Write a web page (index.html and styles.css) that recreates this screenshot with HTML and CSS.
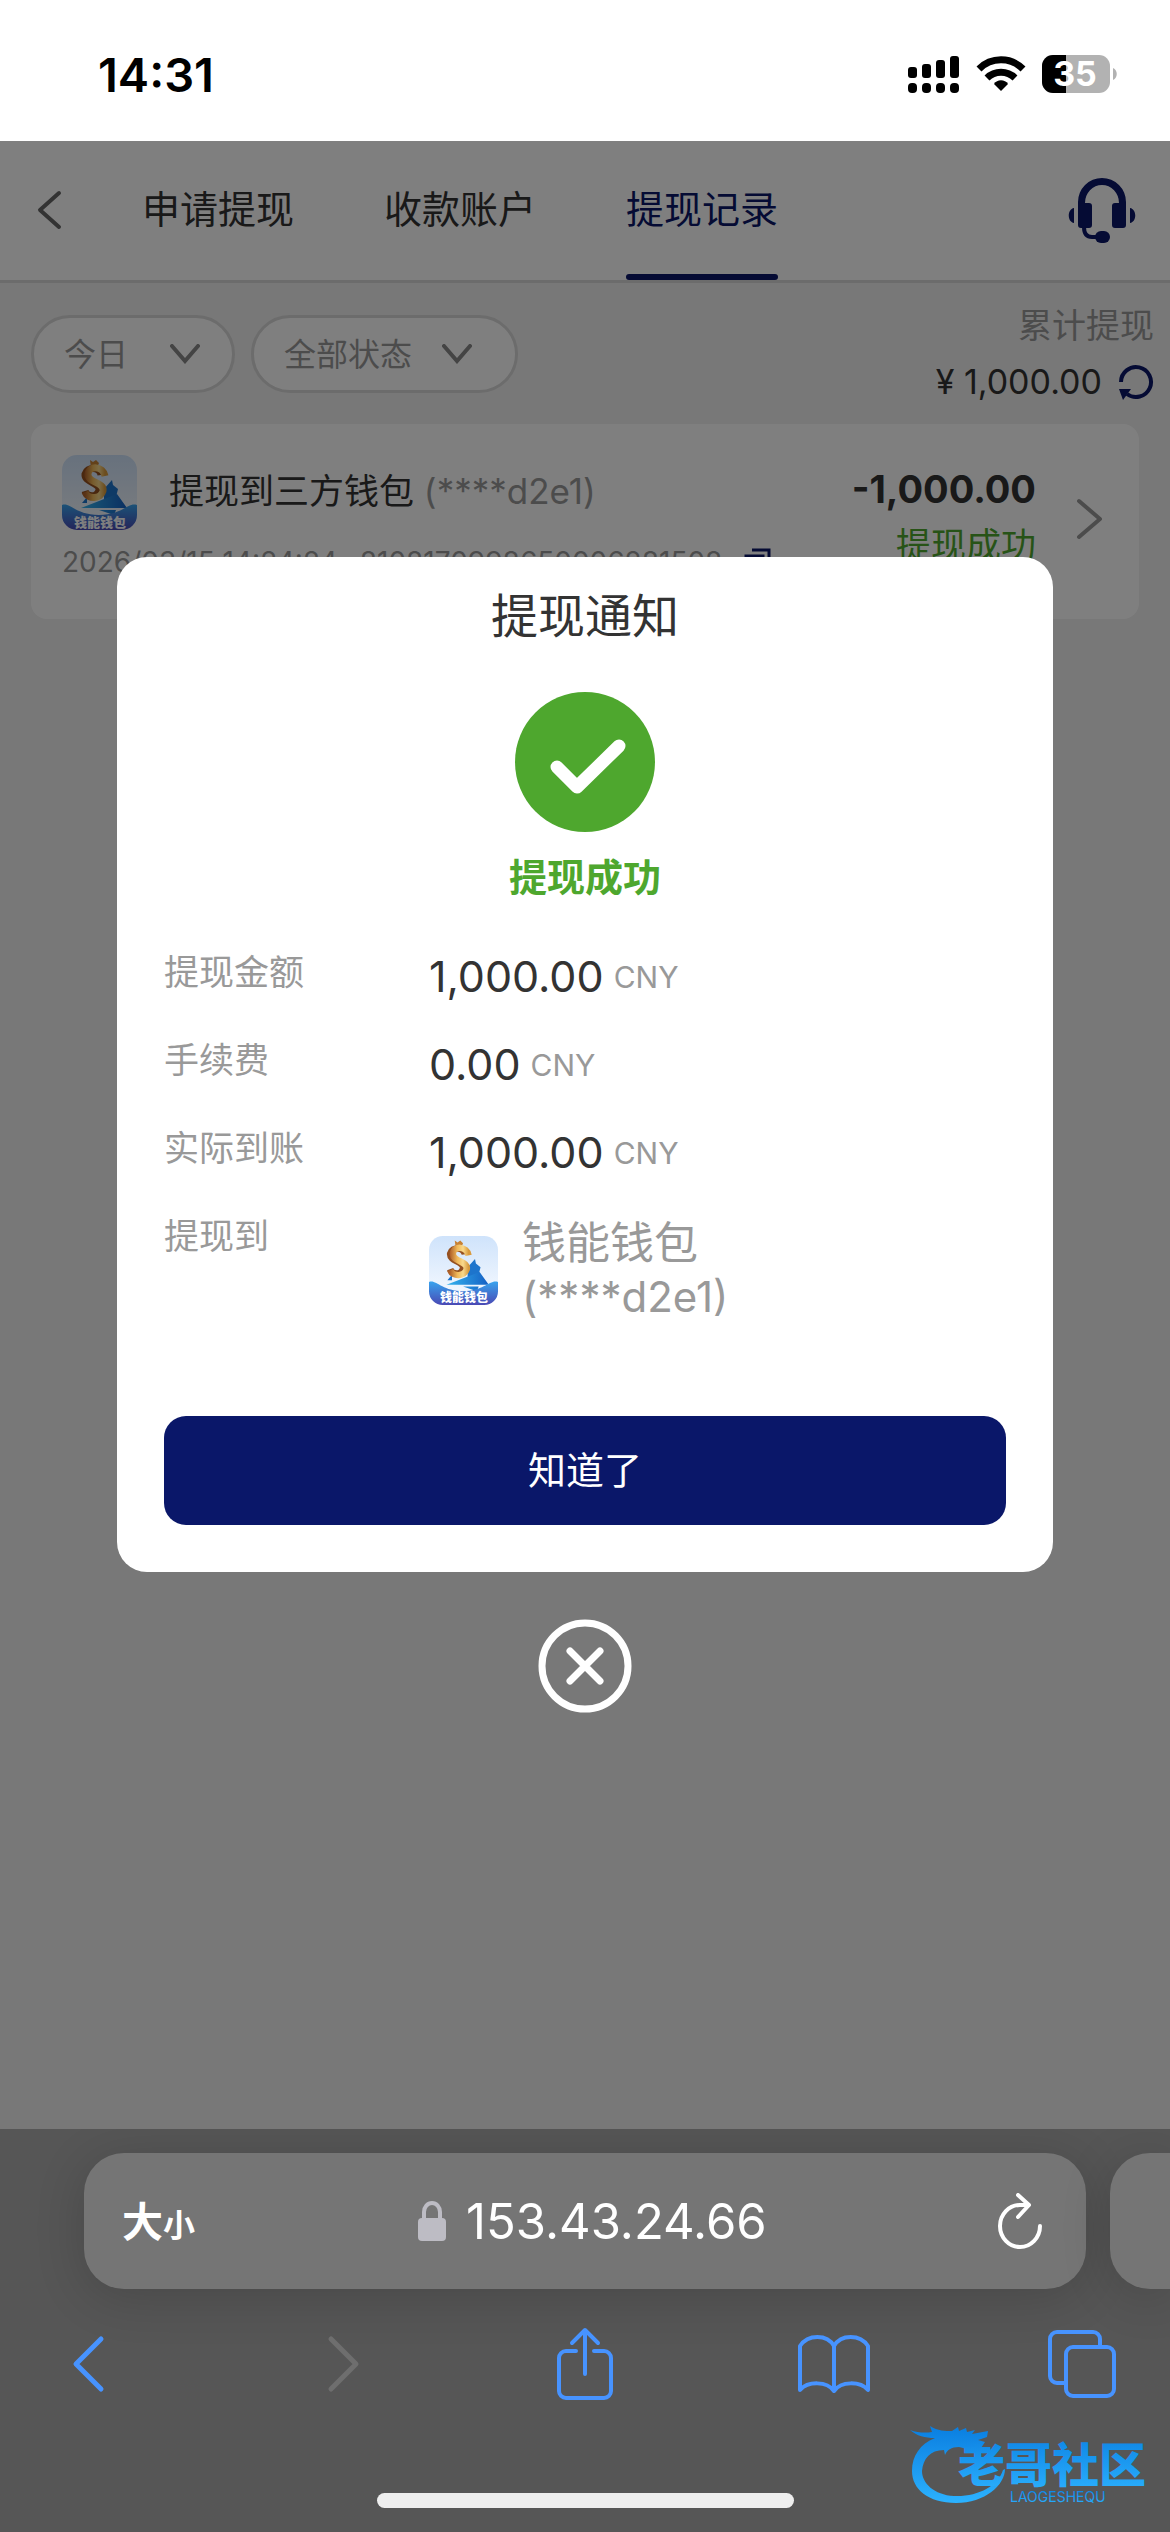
FILE: index.html
```html
<!DOCTYPE html>
<html lang="zh-CN">
<head>
<meta charset="utf-8">
<meta name="viewport" content="width=device-width, initial-scale=1">
<title>提现记录</title>
<link rel="stylesheet" href="styles.css">
</head>
<body>
<svg class="defs" aria-hidden="true">
  <defs>
    <linearGradient id="sky" x1="0" y1="0" x2="0" y2="1"><stop offset="0" stop-color="#cfe3fb"/><stop offset="1" stop-color="#fafcff"/></linearGradient>
    <linearGradient id="wave" x1="0" y1="0" x2="0" y2="1"><stop offset="0" stop-color="#38a3ee"/><stop offset="1" stop-color="#4a49b4"/></linearGradient>
    <linearGradient id="gold" x1="0" y1="0" x2="1" y2="0"><stop offset="0" stop-color="#b0622a"/><stop offset=".4" stop-color="#f0b95a"/><stop offset=".7" stop-color="#f9d98c"/><stop offset="1" stop-color="#d99a3c"/></linearGradient>
    <linearGradient id="plane" x1="0" y1="0" x2="1" y2="0"><stop offset="0" stop-color="#35b4ee"/><stop offset="1" stop-color="#1560c4"/></linearGradient>
    <linearGradient id="brand" x1="0" y1="0" x2="0" y2="1"><stop offset="0" stop-color="#0a7ee0"/><stop offset="1" stop-color="#2cb2ff"/></linearGradient>
    <symbol id="wallet" viewBox="0 0 75 75">
      <rect width="75" height="75" rx="15" fill="url(#sky)"/>
      <path d="M42 34l8-9 1 5 5 4-2 8-12 5z" fill="#1d74cc"/>
      <path d="M20 48l5-6v6z" fill="#1d74cc"/>
      <path d="M28 5l3 2 3-2 3 3-2 5h-6z" fill="#c78235"/>
      <path d="M39 20C38 12 25 11 23 19c-1 9 15 8 14 16-2 8-12 7-14 1" fill="none" stroke="#95501f" stroke-width="7"/>
      <path d="M43 21C41 11 27 10 26 19c-1 9 17 8 15 17-2 8-15 9-18 1" fill="none" stroke="url(#gold)" stroke-width="7"/>
      <path d="M19 53l36-14 10 14zM37 55h17l-2 5z" fill="url(#plane)"/>
      <path d="M0 50c8-3 14 10 37 10s29-13 38-10v10a15 15 0 0 1-15 15H15A15 15 0 0 1 0 60z" fill="url(#wave)"/>
      <text x="38" y="72" text-anchor="middle" font-size="13" font-weight="900" fill="#fff" font-family="Noto Sans CJK SC, sans-serif">钱能钱包</text>
    </symbol>
  </defs>
</svg>

<header class="status">
  <time class="clock">14:31</time>
  <div class="status-icons">
    <svg width="52" height="38" viewBox="0 0 52 38"><g fill="#000"><rect y="12" width="9" height="11" rx="3"/><rect x="14" y="9" width="9" height="14" rx="3"/><rect x="28" y="5" width="9" height="18" rx="3"/><rect x="42" y="1" width="9" height="22" rx="3"/><rect y="28" width="9" height="10" rx="4"/><rect x="14" y="28" width="9" height="10" rx="4"/><rect x="28" y="28" width="9" height="10" rx="4"/><rect x="42" y="28" width="9" height="10" rx="4"/></g></svg>
    <svg width="50" height="38" viewBox="0 0 50 38"><g fill="none" stroke="#000" stroke-width="7"><path d="M3 14a31 31 0 0 1 44 0"/><path d="M11 23a20 20 0 0 1 28 0"/></g><path d="M25 36l-7-7c3-5 11-5 14 0z"/></svg>
    <svg class="battery" width="76" height="38" viewBox="0 0 76 38"><rect width="68" height="38" rx="11" fill="#b2b2b2"/><path d="M24 0H11A11 11 0 0 0 0 11v16a11 11 0 0 0 11 11h13z"/><path d="M71 13c5 2 5 10 0 12z" fill="#b2b2b2"/><text x="33" y="31" text-anchor="middle" font-family="Inter, sans-serif" font-size="34" font-weight="700" fill="#fff">35</text></svg>
  </div>
</header>

<div class="viewport">
  <main class="page">
    <nav class="tabs">
      <button class="icon-button" aria-label="返回"><svg width="26" height="40" viewBox="0 0 26 40"><path d="M23 3L4 20l19 17" fill="none" stroke="#666" stroke-width="4" stroke-linecap="round" stroke-linejoin="round"/></svg></button>
      <div class="tab-list">
        <a class="tab" href="#apply">申请提现</a>
        <a class="tab" href="#accounts">收款账户</a>
        <a class="tab active" href="#records">提现记录</a>
      </div>
      <button class="icon-button" aria-label="客服"><svg width="68" height="66" viewBox="0 0 68 66"><g fill="#0a1769"><path d="M10 27V25a24 24 0 0 1 48 0v23a3 3 0 0 1-3 3h-8a3 3 0 0 1-3-3V29a3 3 0 0 1 3-3h4a17 18 0 0 0-34 0h4a3 3 0 0 1 3 3v19a3 3 0 0 1-3 3h-8a3 3 0 0 1-3-3z"/><path d="M6 31v15c-7-1-7-14 0-15zM62 31v15c7-1 7-14 0-15z"/><rect x="27" y="54" width="15" height="12" rx="6"/></g><path d="M16 50c0 7 3 10 8 10h6" fill="none" stroke="#0a1769" stroke-width="4"/></svg></button>
    </nav>

    <section class="filters">
      <label class="filter"><select class="short" aria-label="日期"><option>今日</option></select><svg width="30" height="20" viewBox="0 0 30 20"><path d="M2 2l13 15L28 2" fill="none" stroke="#888" stroke-width="4" stroke-linecap="round"/></svg></label>
      <label class="filter wide"><select class="long" aria-label="状态"><option>全部状态</option></select><svg width="30" height="20" viewBox="0 0 30 20"><path d="M2 2l13 15L28 2" fill="none" stroke="#888" stroke-width="4" stroke-linecap="round"/></svg></label>
      <div class="total">
        <span class="total-label">累计提现</span>
        <span class="total-value">¥ 1,000.00
          <button class="icon-button" aria-label="刷新"><svg width="36" height="36" viewBox="0 0 36 36"><path d="M3 18a15 15 0 1 1 6 12" fill="none" stroke="#0a1769" stroke-width="4"/><path d="M1 25h12l-8 11z" fill="#0a1769"/></svg></button>
        </span>
      </div>
    </section>

    <article class="record">
      <div class="record-main">
        <div class="record-title"><svg class="record-logo" viewBox="0 0 75 75"><use href="#wallet"/></svg><h2>提现到三方钱包 <span>(****d2e1)</span></h2></div>
        <div class="record-meta"><span>2026/03/15 14:24:24</span><span>8108170998650006281508</span><button class="icon-button" aria-label="复制"><svg width="28" height="28" viewBox="0 0 28 28"><path d="M8 2h17v17M2 8h17v17H2z" fill="none" stroke="#0a1769" stroke-width="3"/></svg></button></div>
      </div>
      <div class="record-side"><strong>-1,000.00</strong><span>提现成功</span></div>
      <svg width="28" height="42" viewBox="0 0 28 42"><path d="M3 3l21 18L3 39" fill="none" stroke="#999" stroke-width="4" stroke-linecap="round" stroke-linejoin="round"/></svg>
    </article>
  </main>

  <div class="overlay">
    <section class="dialog" role="dialog" aria-modal="true" aria-labelledby="dialog-title">
      <h1 id="dialog-title">提现通知</h1>
      <svg class="tick" viewBox="0 0 140 140"><circle cx="70" cy="70" r="70" fill="#4ea72e"/><path d="M42 75l20 20 42-41" fill="none" stroke="#fff" stroke-width="13" stroke-linecap="round" stroke-linejoin="round"/></svg>
      <p class="result">提现成功</p>
      <dl class="details">
        <dt>提现金额</dt><dd>1,000.00<small>CNY</small></dd>
        <dt>手续费</dt><dd>0.00<small>CNY</small></dd>
        <dt>实际到账</dt><dd>1,000.00<small>CNY</small></dd>
        <dt>提现到</dt><dd class="target"><svg class="target-logo" viewBox="0 0 75 75"><use href="#wallet"/></svg><div>钱能钱包<div class="account">(****d2e1)</div></div></dd>
      </dl>
      <button class="confirm">知道了</button>
    </section>
    <button class="icon-button" aria-label="关闭"><svg width="94" height="94" viewBox="0 0 94 94"><g fill="none" stroke="#fff" stroke-linecap="round"><circle cx="47" cy="47" r="43" stroke-width="7"/><path d="M32 32l30 30M62 32L32 62" stroke-width="7"/></g></svg></button>
  </div>
</div>

<footer class="browser">
  <div class="address-row">
    <div class="address">
      <button class="text-size" aria-label="文字大小">大<small>小</small></button>
      <label class="url"><svg width="28" height="40" viewBox="0 0 28 40"><rect y="17" width="28" height="23" rx="4" fill="#bdbcc4"/><path d="M6 19v-8a8 9 0 0 1 16 0v8" fill="none" stroke="#bdbcc4" stroke-width="4"/></svg><input type="text" value="153.43.24.66" aria-label="网址"></label>
      <button class="icon-button" aria-label="重新载入"><svg width="46" height="56" viewBox="0 0 46 56"><path d="M43 33a20 21 0 1 1-20-21h9M21 2l11 10-11 12" fill="none" stroke="#fff" stroke-width="4" stroke-linecap="round" stroke-linejoin="round"/></svg></button>
    </div>
    <div class="address next"></div>
  </div>
  <div class="toolbar">
    <button class="icon-button" aria-label="后退"><svg width="34" height="58" viewBox="0 0 34 58"><path d="M30 4L5 29l25 25" fill="none" stroke="#4793ff" stroke-width="5" stroke-linecap="round" stroke-linejoin="round"/></svg></button>
    <button class="icon-button forward" aria-label="前进" disabled><svg width="34" height="58" viewBox="0 0 34 58"><path d="M4 4l25 25L4 54" fill="none" stroke="#6e6e6e" stroke-width="5" stroke-linecap="round" stroke-linejoin="round"/></svg></button>
    <button class="icon-button" aria-label="分享"><svg width="58" height="74" viewBox="0 0 58 74"><path d="M20 24H10a7 7 0 0 0-7 7v33a7 7 0 0 0 7 7h38a7 7 0 0 0 7-7V31a7 7 0 0 0-7-7H38M29 47V4M16 16L29 3l13 13" fill="none" stroke="#4793ff" stroke-width="4" stroke-linecap="round" stroke-linejoin="round"/></svg></button>
    <button class="icon-button" aria-label="书签"><svg width="72" height="60" viewBox="0 0 72 60"><path d="M36 12C29 0 10 0 2 12v44c8-9 27-9 34 1 7-10 26-10 34-1V12C62 0 43 0 36 12zM36 12v44" fill="none" stroke="#4793ff" stroke-width="4" stroke-linejoin="round"/></svg></button>
    <button class="icon-button" aria-label="标签页"><svg width="68" height="68" viewBox="0 0 68 68"><g fill="none" stroke="#4793ff" stroke-width="4"><path d="M16 53H9a7 7 0 0 1-7-7V9a7 7 0 0 1 7-7h36a7 7 0 0 1 7 7v7"/><rect x="18" y="17" width="48" height="49" rx="7"/></g></svg></button>
  </div>
  <div class="home"></div>
  <svg class="watermark" width="244" height="90" viewBox="0 0 244 90">
    <g fill="url(#brand)"><path d="M0 12c8 3 16 3 22 2l-2-6c8 5 15 5 22 5l6-4 1 4 7-3 1 4 8-2-3 4 16-3-1 6-9 3 7 2-4 6-14 1-8-2c-8 0-12 3-14 8l-1-5C20 32 13 41 12 53c0 12 12 24 32 25 24 1 44-10 49-26l2-1c0 16-20 34-49 34C18 85 2 71 2 53c0-15 8-27 23-33-10 0-18-2-25-8z"/>
    <text x="48" y="64" font-family="Noto Sans CJK SC, sans-serif" font-size="47" font-weight="900">老哥社区</text>
    <text x="100" y="84" font-family="Inter, sans-serif" font-size="14">LAOGESHEQU</text></g>
  </svg>
</footer>
</body>
</html>
```
FILE: styles.css
```css
* { box-sizing: border-box; }
body { margin: 0; min-height: 100vh; display: flex; flex-direction: column; background: #fff; color: #333; font-family: Inter, "Noto Sans CJK SC", sans-serif; }
h1, h2, p, dl, dd { margin: 0; font-weight: 400; }
button, input, select { font: inherit; color: inherit; background: none; border: 0; padding: 0; }
svg { display: block; flex: none; }
a { color: inherit; text-decoration: none; }
.defs { position: absolute; width: 0; height: 0; }
.icon-button { display: flex; }
.status { height: 141px; padding: 7px 52px 0 98px; display: flex; align-items: center; justify-content: space-between; color: #000; }
.clock { font-size: 47px; font-weight: 600; }
.status-icons { display: flex; gap: 16px; }
.battery { overflow: visible; }
.viewport { position: relative; flex: 1; background: #f0f0f0; }
.tabs { height: 142px; border-bottom: 3px solid #d8d8d8; background: #fff; padding: 0 34px 0 36px; display: flex; align-items: center; }
.tabs .icon-button { margin-bottom: 2px; }
.tab-list { display: flex; align-self: stretch; flex: 1; gap: 90px; padding-left: 80px; }
.tab { position: relative; display: flex; align-items: center; font-size: 38px; padding-bottom: 8px; }
.active { color: #0a1769; }
.active::after { content: ""; position: absolute; left: 0; right: 0; bottom: 0; height: 6px; border-radius: 3px; background: #0a1769; }
.filters { display: flex; align-items: center; gap: 16px; padding: 19px 16px 18px 31px; }
.filter { height: 78px; border: 3px solid #d8d8d8; border-radius: 39px; background: #fff; display: flex; align-items: center; padding: 0 32px 0 30px; color: #999; font-size: 32px; }
.wide { padding-right: 43px; }
.filter select { appearance: none; }
.short { width: 106px; }
.long { width: 158px; }
.total { margin-left: auto; display: flex; flex-direction: column; align-items: flex-end; font-size: 34px; line-height: 48px; gap: 8px; }
.total-label { color: #999; }
.total-value { display: flex; align-items: center; gap: 16px; }
.record { margin: 0 31px; height: 195px; padding: 31px 35px 0 31px; background: #fff; border-radius: 16px; display: flex; }
.record-main { flex: 1; }
.record-title { display: flex; align-items: center; gap: 32px; }
.record-logo { width: 75px; height: 75px; }
.record h2 { font-size: 35px; line-height: 44px; padding-bottom: 4px; }
.record h2 span, .record-meta { color: #999; }
.record-meta { display: flex; align-items: center; gap: 22px; font-size: 28px; line-height: 40px; margin-top: 12px; }
.record-side { display: flex; flex-direction: column; align-items: flex-end; margin-right: 40px; gap: 8px; padding-top: 10px; }
.record-side strong { font-size: 38px; line-height: 48px; }
.record-side span { font-size: 35px; line-height: 48px; color: #4ea72e; }
.record > svg { margin-top: 43px; }
.overlay { position: absolute; inset: 0; background: rgba(0, 0, 0, .5); display: flex; flex-direction: column; align-items: center; justify-content: center; gap: 47px; }
.dialog { width: 80%; background: #fff; border-radius: 30px; padding: 24px 47px 47px; display: flex; flex-direction: column; align-items: center; }
.dialog h1 { font-size: 47px; line-height: 70px; }
.tick { width: 140px; height: 140px; margin-top: 41px; }
.result { font-size: 38px; font-weight: 700; line-height: 56px; color: #4ea72e; margin-top: 17px; }
.details { align-self: stretch; display: grid; grid-template-columns: 265px 1fr; row-gap: 32px; margin-top: 39px; line-height: 56px; }
.details dt { font-size: 35px; color: #999; }
.details dd { display: flex; align-items: center; gap: 10px; font-size: 43px; padding-top: 8px; height: 56px; }
.details small { font-size: 30px; color: #999; padding-top: 2px; }
.details .target { gap: 24px; height: auto; color: #999; font-size: 44px; line-height: 54px; }
.account { font-size: 42px; }
.target-logo { width: 69px; height: 69px; }
.confirm { align-self: stretch; height: 109px; margin-top: 92px; padding-bottom: 6px; border-radius: 22px; background: #0a1769; color: #fff; font-size: 38px; }
.browser { position: relative; height: 403px; background: #565656; overflow: hidden; padding-top: 24px; color: #fff; }
.address-row { display: flex; gap: 24px; padding-left: 84px; }
.address { flex: 1; height: 136px; border-radius: 40px; background: #757575; box-shadow: 0 8px 50px rgba(0, 0, 0, .16); display: flex; align-items: center; justify-content: space-between; padding: 0 43px 0 38px; }
.next { flex: 0 0 60px; border-radius: 40px 0 0 40px; padding: 0; }
.text-size { font-size: 41px; font-weight: 700; padding-bottom: 4px; }
.text-size small { font-size: 32px; }
.url { display: flex; align-items: center; gap: 20px; }
.url input { width: 308px; font-size: 49px; }
.toolbar { display: flex; align-items: center; justify-content: space-between; padding: 0 54px; margin-top: 38px; }
.toolbar .icon-button { width: 68px; justify-content: center; }
.toolbar .forward { padding-left: 14px; }
.home { width: 417px; height: 15px; border-radius: 8px; background: #eee; margin: 92px auto 0; }
.watermark { position: absolute; right: 16px; bottom: 24px; }
```
